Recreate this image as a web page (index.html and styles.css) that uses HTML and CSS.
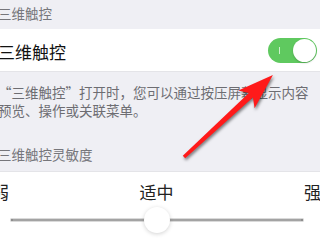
FILE: index.html
```html
<!DOCTYPE html>
<html lang="zh-CN">

<head>
    <meta charset="UTF-8">
    <meta name="viewport" content="width=device-width, initial-scale=1.0">
    <title>三维触控</title>
    <link rel="stylesheet" href="styles.css">
</head>

<body>

    <div class="page">
        <div class="group-title first">三维触控</div>

        <div class="cell">
            <span class="cell-label">三维触控</span>
            <div class="switch on">
                <span class="switch-mark"></span>
                <span class="switch-knob"></span>
            </div>
        </div>

        <div class="note">“三维触控”打开时，您可以通过按压屏幕显示内容预览、操作或关联菜单。</div>

        <div class="group-title second">三维触控灵敏度</div>

        <div class="slider-cell">
            <div class="slider-labels">
                <span>弱</span>
                <span>适中</span>
                <span>强</span>
            </div>
            <div class="slider">
                <span class="slider-track"></span>
                <span class="slider-thumb"></span>
            </div>
        </div>
    </div>

    <!-- annotation arrow -->
    <svg class="arrow" width="320" height="240" viewBox="0 0 320 240">
        <g transform="translate(184 157) rotate(-42.7)">
            <polygon points="0,-1.8 91,-3 85,-12 121,0 85,12 91,3 0,1.8" fill="#ff1a1a" />
        </g>
    </svg>

</body>

</html>
```

FILE: styles.css
```css
body {
    margin: 0;
    background-color: #efeff4;
    font-family: "Noto Sans CJK SC", "Noto Sans", sans-serif;
    overflow: hidden;
    position: relative;
    height: 240px;
}

.page {
    margin-left: -2px;
}

/* Section titles */
.group-title {
    font-size: 13.5px;
    line-height: 18px;
    color: #76767b;
}

.group-title.first {
    padding: 4px 0 7px;
}

.group-title.second {
    padding: 26px 0 8px;
}

/* Switch row */
.cell {
    height: 42px;
    background: #fff;
    border-bottom: 1px solid #e4e4e8;
    display: flex;
    justify-content: space-between;
    align-items: center;
    padding-right: 3px;
}

.cell-label {
    font-size: 17px;
    color: #111;
    padding-top: 2px;
}

.switch {
    width: 49px;
    height: 25px;
    border-radius: 13px;
    background: #5fc95f;
    position: relative;
}

.switch-mark {
    position: absolute;
    left: 11px;
    top: 9px;
    width: 1px;
    height: 7px;
    background: rgba(255, 255, 255, 0.7);
}

.switch-knob {
    position: absolute;
    right: 1px;
    top: 1px;
    width: 23px;
    height: 23px;
    border-radius: 50%;
    background: #fff;
    box-shadow: 0 1px 2px rgba(0, 0, 0, 0.2);
}

/* Footer note */
.note {
    padding: 11px 0 0;
    font-size: 13.5px;
    line-height: 18px;
    color: #6d6d72;
}

/* Sensitivity slider */
.slider-cell {
    background: #fff;
    border-top: 1px solid #e4e4e8;
    height: 70px;
}

.slider-labels {
    display: flex;
    justify-content: space-between;
    margin: 0 -1px 0 -6px;
    padding-top: 10px;
    font-size: 17px;
    line-height: 20px;
    color: #222;
}

.slider {
    position: relative;
    height: 26px;
    margin: 5px 17px 0 13px;
    display: flex;
    align-items: center;
}

.slider-track {
    flex: 1;
    height: 2px;
    background: #a3a3a3;
    border-left: 2px solid #8e8e8e;
    border-right: 2px solid #8e8e8e;
    box-shadow: 0 0 0 0.5px #b5b5b5;
}

.slider-thumb {
    position: absolute;
    left: 50%;
    top: 0;
    width: 26px;
    height: 26px;
    margin-left: -13px;
    border-radius: 50%;
    background: #fff;
    box-shadow: 0 1px 4px rgba(0, 0, 0, 0.18);
}

/* Red arrow overlay */
.arrow {
    position: absolute;
    left: 0;
    top: 0;
    filter: drop-shadow(1px 2px 1.5px rgba(0, 0, 0, 0.5));
}
```
